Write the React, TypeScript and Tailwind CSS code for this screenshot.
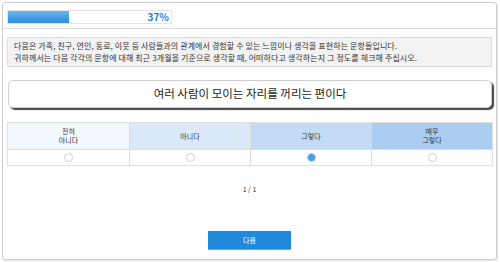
import { useState } from 'react';

const OPTIONS = [
  { key: 1, label: ['전혀', '아니다'], bg: 'bg-[#f3f8fe]' },
  { key: 2, label: ['아니다'], bg: 'bg-[#dbe8f8]' },
  { key: 3, label: ['그렇다'], bg: 'bg-[#c4dbf6]' },
  { key: 4, label: ['매우', '그렇다'], bg: 'bg-[#accdf2]' },
];

const font = { fontFamily: "'Noto Sans CJK KR', 'Noto Sans', sans-serif" };

export default function App() {
  const [answer, setAnswer] = useState(3);

  return (
    <div className="w-[500px] h-[262px] bg-white pt-[2px] pl-[2px] pr-[3px]" style={font}>
      <div className="h-[258px] border border-[#cdcdcd] rounded-[3px] shadow-[1px_1px_2px_rgba(0,0,0,0.12)] flex flex-col">
        {/* progress */}
        <div className="h-[26px] border-b border-[#dcdcdc] pl-[4px] pt-[7px]">
          <div className="relative w-[165px] h-[14px] border border-[#e2e2e2] bg-white">
            <div className="h-full w-[61px] bg-gradient-to-b from-[#63b6f0] to-[#2b8fdc]" />
            <span className="absolute right-[2px] top-[-1px] text-[10px] leading-[14px] font-bold text-[#2b7ec9]">37%</span>
          </div>
        </div>

        {/* guide */}
        <div className="mt-[8px] mx-[4px] h-[30px] border border-[#dedede] bg-[#f2f2f2] px-[6px] pt-[2px] text-[8px] leading-[12px] text-[#333] tracking-[0.1px]">
          <p>다음은 가족, 친구, 연인, 동료, 이웃 등 사람들과의 관계에서 경험할 수 있는 느낌이나 생각을 표현하는 문항들입니다.</p>
          <p>귀하께서는 다음 각각의 문항에 대해 최근 3개월을 기준으로 생각할 때, 어떠하다고 생각하는지 그 정도를 체크해 주십시오.</p>
        </div>

        {/* question */}
        <div className="mt-[13px] ml-[5px] mr-[4px] h-[28px] rounded-[5px] border border-[#cfcfcf] bg-white shadow-[2px_2px_1px_rgba(40,40,40,0.85)] flex items-center justify-center text-[11.5px] text-[#222]">
          여러 사람이 모이는 자리를 꺼리는 편이다
        </div>

        {/* scale */}
        <div className="mt-[14px] ml-[4px] mr-[3px] border border-[#e0e0e0] grid grid-cols-4">
          {OPTIONS.map((o, i) => (
            <div key={o.key} className={`h-[27px] flex flex-col items-center justify-center text-[7px] leading-[9px] text-[#333] border-b border-[#dcdcdc] ${o.bg} ${i > 0 ? 'border-l border-l-[#dcdcdc]' : ''}`}>
              {o.label.map(l => (
                <span key={l}>{l}</span>
              ))}
            </div>
          ))}
          {OPTIONS.map((o, i) => (
            <div key={o.key} className={`h-[15px] flex items-center justify-center bg-white ${i > 0 ? 'border-l border-[#dcdcdc]' : ''}`}>
              <button
                onClick={() => setAnswer(o.key)}
                className={
                  answer === o.key
                    ? 'w-[9px] h-[9px] rounded-full bg-[#4a9de8] border border-[#a9cff2]'
                    : 'w-[9px] h-[9px] rounded-full bg-white border border-[#cfcfcf]'
                }
              />
            </div>
          ))}
        </div>

        <div className="mt-[18px] text-center text-[7px] leading-[10px] text-[#333]">1 / 1</div>

        <div className="mt-[37px] flex justify-center">
          <button className="w-[83px] h-[19px] bg-[#2189da] text-white text-[7px] leading-[19px] border-b border-[#5aa9e6]">다음</button>
        </div>
      </div>
    </div>
  );
}
